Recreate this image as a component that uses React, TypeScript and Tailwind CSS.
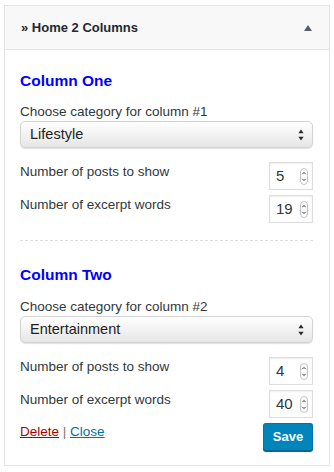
import React from 'react';

function SelectArrows() {
  return (
    <svg width="6" height="12" viewBox="0 0 6 12" className="shrink-0">
      <path d="M3 0.5 L5.6 4.2 L0.4 4.2 Z" fill="#2b2b2b" />
      <path d="M3 11.5 L5.6 7.8 L0.4 7.8 Z" fill="#2b2b2b" />
    </svg>
  );
}

function Spinner() {
  return (
    <svg width="8" height="17" viewBox="0 0 8 17" className="shrink-0">
      <rect x="0.5" y="0.5" width="7" height="16" rx="3.5" fill="#fdfdfd" stroke="#c4c4c4" />
      <path d="M2.3 6.2 L4 4.4 L5.7 6.2" fill="none" stroke="#444" strokeWidth="1" />
      <path d="M2.3 10.8 L4 12.6 L5.7 10.8" fill="none" stroke="#444" strokeWidth="1" />
    </svg>
  );
}

function CategorySelect({ value }: { value: string }) {
  return (
    <div className="h-[27px] flex items-center justify-between pl-[9px] pr-[8px] rounded-[5px] border border-[#d3d3d3] bg-gradient-to-b from-white to-[#e6e6e6] shadow-[0_1px_1px_rgba(0,0,0,0.12)] text-[14.5px] text-[#222]">
      <span>{value}</span>
      <SelectArrows />
    </div>
  );
}

function NumberRow({ label, value, first }: { label: string; value: string; first?: boolean }) {
  return (
    <div className={`flex items-start justify-between ${first ? 'mt-[14px]' : 'mt-[5px]'}`}>
      <span className="pt-[1px] leading-[18px]">{label}</span>
      <div className="w-[44px] h-[28px] flex items-center justify-between pl-[6px] pr-[4px] border border-[#dddddd] bg-white shadow-[inset_0_1px_2px_rgba(0,0,0,0.07)] text-[15px] text-[#32373c]">
        <span>{value}</span>
        <Spinner />
      </div>
    </div>
  );
}

function ColumnSection({ title, num, category, posts, words, top }: { title: string; num: number; category: string; posts: string; words: string; top: string }) {
  return (
    <div>
      <h3 className={`${top} leading-[20px] text-[15.5px] font-bold text-[#0000ff]`}>{title}</h3>
      <p className={`${num === 1 ? 'mt-[12px]' : 'mt-[13px]'} leading-[18px]`}>Choose category for column #{num}</p>
      <CategorySelect value={category} />
      <NumberRow label="Number of posts to show" value={posts} first />
      <NumberRow label="Number of excerpt words" value={words} />
    </div>
  );
}

export default function App() {
  return (
    <div className="min-h-screen bg-white pt-[5px] pl-[4px] font-['Liberation_Sans',Arial,sans-serif] text-[13.5px] text-[#32373c]">
      <div className="w-[326px] border border-[#e5e5e5] bg-white">
        {/* Widget header */}
        <div className="h-[44px] flex items-center justify-between pl-[16px] pr-[17px] bg-[#f8f8f8] border-b border-[#e5e5e5]">
          <span className="text-[13px] font-bold text-[#23282d]">» Home 2 Columns</span>
          <svg width="8" height="6" viewBox="0 0 8 6">
            <path d="M4 0 L8 6 L0 6 Z" fill="#555d66" />
          </svg>
        </div>

        {/* Widget body */}
        <div className="pl-[15px] pr-[16px] pb-[14px]">
          <ColumnSection title="Column One" num={1} category="Lifestyle" posts="5" words="19" top="mt-[21px]" />
          <div className="mt-[17px] border-t border-dashed border-[#dddddd]" />
          <ColumnSection title="Column Two" num={2} category="Entertainment" posts="4" words="40" top="mt-[24px]" />

          <div className="mt-[5px] flex items-start justify-between">
            <div className="leading-[18px]">
              <a href="#" className="text-[#aa0000] underline">Delete</a>
              <span className="text-[#777]"> | </span>
              <a href="#" className="text-[#0073aa] underline">Close</a>
            </div>
            <button className="w-[50px] h-[28px] rounded-[3px] border border-[#0073aa] border-b-[#006799] bg-[#0085ba] shadow-[0_1px_0_#006799] text-[13px] font-semibold text-white">
              Save
            </button>
          </div>
        </div>
      </div>
    </div>
  );
}
